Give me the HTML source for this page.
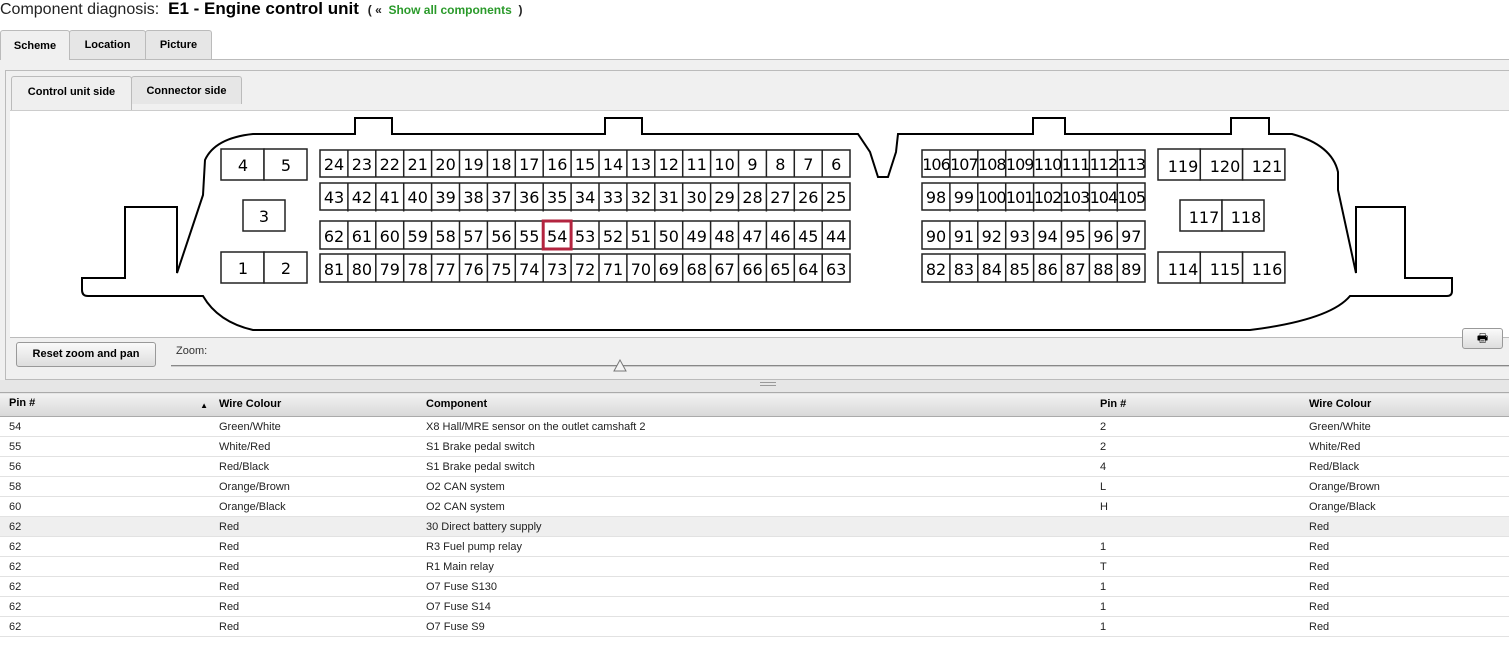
<!DOCTYPE html>
<html><head><meta charset="utf-8"><style>
*{margin:0;padding:0;box-sizing:border-box}
body{width:1509px;height:648px;overflow:hidden;background:#fff;font-family:"Liberation Sans","DejaVu Sans",sans-serif;position:relative;color:#000}
.abs{position:absolute}
.tab{position:absolute;border:1px solid #bbb;border-bottom:none;font-weight:bold;font-size:11px;text-align:center;border-radius:3px 3px 0 0;background:#e6e6e6}
table{position:absolute;left:0;top:392px;width:1509px;border-collapse:collapse;font-size:11px}
th{text-align:left;height:24px;background:linear-gradient(#f2f2f2,#d8d8d8);border-top:1px solid #aaa;border-bottom:1px solid #aaa;font-weight:bold;padding-left:9px;padding-bottom:2px}
td{height:20px;border-bottom:1px solid #e2e2e2;padding-left:9px;color:#222;padding-top:1px}
tr.h td{background:#efefef}
svg text{font-family:"DejaVu Sans",sans-serif;font-size:16px;text-anchor:middle}
</style></head><body>
<div class="abs" style="left:0;top:-1px;font-size:16px;color:#222;white-space:nowrap">Component diagnosis:&nbsp; <b style="font-size:17px;color:#000">E1 - Engine control unit</b> &nbsp;<b style="font-size:12px">( «&nbsp; <span style="color:#2a9a2a">Show all components</span> &nbsp;)</b></div>
<div class="abs" style="left:0;top:59px;width:1509px;height:1px;background:#bbb"></div>
<div class="tab" style="left:0;top:30px;width:70px;height:30px;line-height:30px;background:#f0f0f0">Scheme</div>
<div class="tab" style="left:69px;top:30px;width:77px;height:29px;line-height:28px">Location</div>
<div class="tab" style="left:145px;top:30px;width:67px;height:29px;line-height:28px">Picture</div>
<div class="abs" style="left:0;top:60px;width:1509px;height:333px;background:#f0f0f0"></div>
<div class="abs" style="left:5px;top:70px;width:1510px;height:310px;border:1px solid #bbb;background:#f0f0f0"></div>
<div class="tab" style="left:11px;top:76px;width:121px;height:35px;line-height:30px;background:#efefef">Control unit side</div>
<div class="tab" style="left:131px;top:76px;width:111px;height:28px;line-height:28px">Connector side</div>
<div class="abs" style="left:10px;top:110px;width:1500px;height:228px;background:#fff;border-top:1px solid #ccc;border-bottom:1px solid #bbb"></div>
<div class="abs" style="left:16px;top:342px;width:140px;height:25px;border:1px solid #999;border-radius:3px;background:linear-gradient(#fafafa,#ddd);font-size:11px;font-weight:bold;text-align:center;line-height:23px">Reset zoom and pan</div>
<div class="abs" style="left:176px;top:345px;font-size:11px;color:#333">Zoom:</div>
<div class="abs" style="left:171px;top:365px;width:1340px;height:2px;border-top:1px solid #888;border-bottom:1px solid #ccc"></div>
<svg class="abs" style="left:613px;top:359px" width="14" height="14"><path d="M1 12 L7 1 L13 12 Z" fill="#f4f4f4" stroke="#777"/></svg>
<div class="abs" style="left:1462px;top:328px;width:41px;height:21px;border:1px solid #999;border-radius:3px;background:linear-gradient(#fafafa,#ddd);text-align:center;font-size:12px;line-height:19px">🖶</div>
<div class="abs" style="left:0;top:380px;width:1509px;height:13px;background:#e6e6e6"></div>
<div class="abs" style="left:760px;top:382px;width:16px;height:4px;border-top:1px solid #999;border-bottom:1px solid #999"></div>

<svg class="abs" style="left:0;top:0" width="1509" height="340">
<path d="M253 134 L355 134 L355 118 L392 118 L392 134 L605 134 L605 118 L642 118 L642 134 L858 134 L870 152 L878 177 L888 177 L896 152 L898 134 L1033 134 L1033 118 L1065 118 L1065 134 L1231 134 L1231 118 L1269 118 L1269 134 L1292 134 Q1332 145 1338 172 L1338 190 L1356 273 L1356 207 L1405 207 L1405 278 L1452 278 L1452 291 Q1452 296 1447 296 L1350 296 Q1330 320 1250 330 L253 330 Q218 322 203 296 L88 296 Q82 296 82 290 L82 278 L125 278 L125 207 L177 207 L177 273 L203 195 L205 160 Q215 138 253 134 Z" fill="none" stroke="#000" stroke-width="2"/>
<g fill="#fff" stroke="#222" stroke-width="1.5">
<rect x="221" y="149" width="43" height="31"/><rect x="264" y="149" width="43" height="31"/>
<rect x="243" y="200" width="42" height="31"/>
<rect x="221" y="252" width="43" height="31"/><rect x="264" y="252" width="43" height="31"/>
<rect x="1158" y="149" width="42.3" height="31"/><rect x="1200.3" y="149" width="42.3" height="31"/><rect x="1242.6" y="149" width="42.3" height="31"/>
<rect x="1180" y="200" width="42" height="31"/><rect x="1222" y="200" width="42" height="31"/>
<rect x="1158" y="252" width="42.3" height="31"/><rect x="1200.3" y="252" width="42.3" height="31"/><rect x="1242.6" y="252" width="42.3" height="31"/>
</g>
<g stroke="#222" stroke-width="1.5">
<path d="M347.9 150V282M375.8 150V282M403.7 150V282M431.6 150V282M459.5 150V282M487.4 150V282M515.3 150V282M543.2 150V282M571.1 150V282M599 150V282M626.9 150V282M654.8 150V282M682.7 150V282M710.6 150V282M738.5 150V282M766.4 150V282M794.3 150V282M822.2 150V282"/>
<path d="M949.9 150V282M977.8 150V282M1005.7 150V282M1033.6 150V282M1061.5 150V282M1089.4 150V282M1117.3 150V282"/>
<path d="M320 180H850M320 216H850M320 251.5H850M922 180H1145M922 216H1145M922 251.5H1145" stroke="#fff" stroke-width="5"/>
<path d="M320 216H850M922 216H1145" stroke="#fff" stroke-width="9"/>
</g>
<g fill="none" stroke="#222" stroke-width="1.5">
<rect x="320" y="150" width="530" height="27"/><rect x="320" y="183" width="530" height="27"/><rect x="320" y="221" width="530" height="28"/><rect x="320" y="254" width="530" height="28"/>
<rect x="922" y="150" width="223" height="27"/><rect x="922" y="183" width="223" height="27"/><rect x="922" y="221" width="223" height="28"/><rect x="922" y="254" width="223" height="28"/>
</g>
<rect x="543.2" y="221" width="27.9" height="28" fill="none" stroke="#b3243f" stroke-width="3"/>
<g>
<text x="243" y="171">4</text><text x="286" y="171">5</text><text x="264" y="222">3</text><text x="243" y="274">1</text><text x="286" y="274">2</text>
<text x="1183" y="172">119</text><text x="1225" y="172">120</text><text x="1267" y="172">121</text>
<text x="1204" y="223">117</text><text x="1246" y="223">118</text>
<text x="1183" y="275">114</text><text x="1225" y="275">115</text><text x="1267" y="275">116</text>
</g>
<g transform="translate(334,170)">
<text x="0">24</text><text x="27.9">23</text><text x="55.8">22</text><text x="83.7">21</text><text x="111.6">20</text><text x="139.5">19</text><text x="167.4">18</text><text x="195.3">17</text><text x="223.2">16</text><text x="251.1">15</text><text x="279">14</text><text x="306.9">13</text><text x="334.8">12</text><text x="362.7">11</text><text x="390.6">10</text><text x="418.5">9</text><text x="446.4">8</text><text x="474.3">7</text><text x="502.2">6</text>
</g>
<g transform="translate(334,203)">
<text x="0">43</text><text x="27.9">42</text><text x="55.8">41</text><text x="83.7">40</text><text x="111.6">39</text><text x="139.5">38</text><text x="167.4">37</text><text x="195.3">36</text><text x="223.2">35</text><text x="251.1">34</text><text x="279">33</text><text x="306.9">32</text><text x="334.8">31</text><text x="362.7">30</text><text x="390.6">29</text><text x="418.5">28</text><text x="446.4">27</text><text x="474.3">26</text><text x="502.2">25</text>
</g>
<g transform="translate(334,242)">
<text x="0">62</text><text x="27.9">61</text><text x="55.8">60</text><text x="83.7">59</text><text x="111.6">58</text><text x="139.5">57</text><text x="167.4">56</text><text x="195.3">55</text><text x="223.2">54</text><text x="251.1">53</text><text x="279">52</text><text x="306.9">51</text><text x="334.8">50</text><text x="362.7">49</text><text x="390.6">48</text><text x="418.5">47</text><text x="446.4">46</text><text x="474.3">45</text><text x="502.2">44</text>
</g>
<g transform="translate(334,275)">
<text x="0">81</text><text x="27.9">80</text><text x="55.8">79</text><text x="83.7">78</text><text x="111.6">77</text><text x="139.5">76</text><text x="167.4">75</text><text x="195.3">74</text><text x="223.2">73</text><text x="251.1">72</text><text x="279">71</text><text x="306.9">70</text><text x="334.8">69</text><text x="362.7">68</text><text x="390.6">67</text><text x="418.5">66</text><text x="446.4">65</text><text x="474.3">64</text><text x="502.2">63</text>
</g>
<g transform="translate(936,170)" style="letter-spacing:-1px">
<text x="0">106</text><text x="27.9">107</text><text x="55.8">108</text><text x="83.7">109</text><text x="111.6">110</text><text x="139.5">111</text><text x="167.4">112</text><text x="195.3">113</text>
</g>
<g transform="translate(936,203)">
<text x="0">98</text><text x="27.9">99</text><text x="55.8" style="letter-spacing:-1px">100</text><text x="83.7" style="letter-spacing:-1px">101</text><text x="111.6" style="letter-spacing:-1px">102</text><text x="139.5" style="letter-spacing:-1px">103</text><text x="167.4" style="letter-spacing:-1px">104</text><text x="195.3" style="letter-spacing:-1px">105</text>
</g>
<g transform="translate(936,242)">
<text x="0">90</text><text x="27.9">91</text><text x="55.8">92</text><text x="83.7">93</text><text x="111.6">94</text><text x="139.5">95</text><text x="167.4">96</text><text x="195.3">97</text>
</g>
<g transform="translate(936,275)">
<text x="0">82</text><text x="27.9">83</text><text x="55.8">84</text><text x="83.7">85</text><text x="111.6">86</text><text x="139.5">87</text><text x="167.4">88</text><text x="195.3">89</text>
</g>
</svg>

<table>
<colgroup><col style="width:210px"><col style="width:207px"><col style="width:674px"><col style="width:209px"><col></colgroup>
<tr><th>Pin #<span style="float:right;font-size:8px;margin-right:2px;margin-top:4px">▲</span></th><th>Wire Colour</th><th>Component</th><th>Pin #</th><th>Wire Colour</th></tr>
<tr><td>54</td><td>Green/White</td><td>X8 Hall/MRE sensor on the outlet camshaft 2</td><td>2</td><td>Green/White</td></tr>
<tr><td>55</td><td>White/Red</td><td>S1 Brake pedal switch</td><td>2</td><td>White/Red</td></tr>
<tr><td>56</td><td>Red/Black</td><td>S1 Brake pedal switch</td><td>4</td><td>Red/Black</td></tr>
<tr><td>58</td><td>Orange/Brown</td><td>O2 CAN system</td><td>L</td><td>Orange/Brown</td></tr>
<tr><td>60</td><td>Orange/Black</td><td>O2 CAN system</td><td>H</td><td>Orange/Black</td></tr>
<tr class="h"><td>62</td><td>Red</td><td>30 Direct battery supply</td><td></td><td>Red</td></tr>
<tr><td>62</td><td>Red</td><td>R3 Fuel pump relay</td><td>1</td><td>Red</td></tr>
<tr><td>62</td><td>Red</td><td>R1 Main relay</td><td>T</td><td>Red</td></tr>
<tr><td>62</td><td>Red</td><td>O7 Fuse S130</td><td>1</td><td>Red</td></tr>
<tr><td>62</td><td>Red</td><td>O7 Fuse S14</td><td>1</td><td>Red</td></tr>
<tr><td>62</td><td>Red</td><td>O7 Fuse S9</td><td>1</td><td>Red</td></tr>
</table>
</body></html>
